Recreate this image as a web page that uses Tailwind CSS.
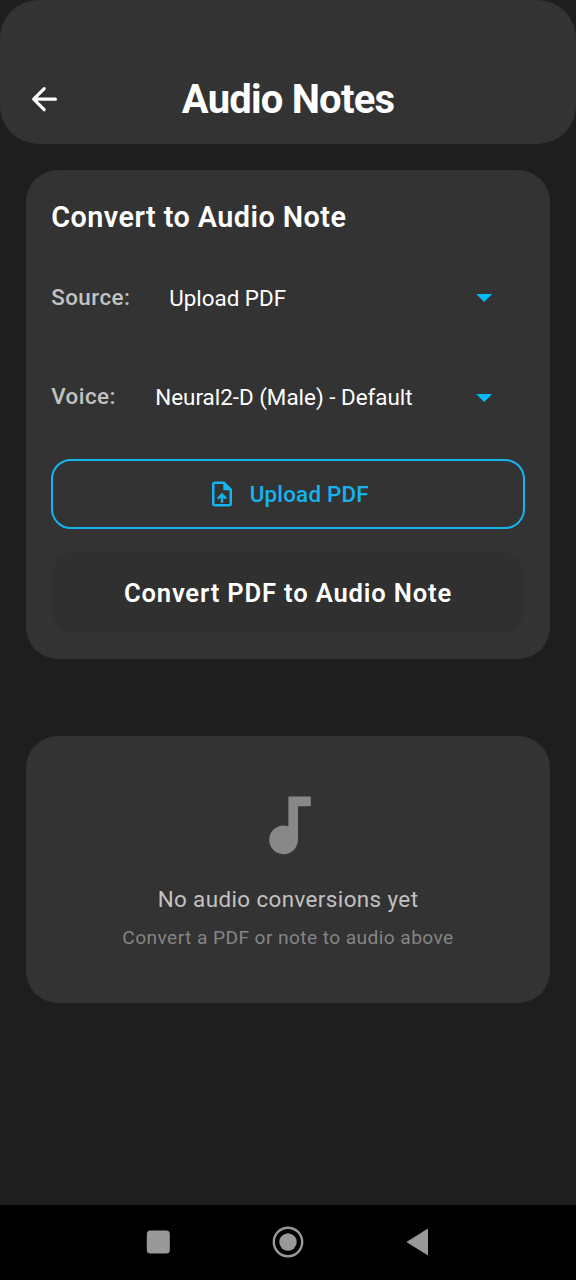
<!DOCTYPE html>
<html lang="en">
<head>
<meta charset="utf-8">
<title>Audio Notes</title>
<script src="https://cdn.jsdelivr.net/npm/@tailwindcss/browser@4"></script>
</head>
<body class="bg-[#1e1e1e]">
<div class="flex h-[1280px] w-[576px] flex-col overflow-hidden bg-[#1e1e1e] font-['Roboto',sans-serif] text-white">
  <header class="grid h-[144px] shrink-0 grid-cols-[89px_1fr_89px] items-center rounded-[38.4px] bg-[#333333] pt-[54px]">
    <button class="flex justify-center" aria-label="Back">
      <svg class="size-[38.4px]" viewBox="0 0 24 24" fill="currentColor"><path d="M19 11H7.83l4.88-4.88c.39-.39.39-1.03 0-1.42a.996.996 0 0 0-1.41 0l-6.59 6.59a.996.996 0 0 0 0 1.41l6.59 6.59a.996.996 0 1 0 1.41-1.41L7.83 13H19c.55 0 1-.45 1-1s-.45-1-1-1z"/></svg>
    </button>
    <h1 class="pt-0.5 text-center text-[40px] leading-[48px] font-bold tracking-[-0.8px] whitespace-nowrap">Audio Notes</h1>
  </header>

  <main class="flex flex-1 flex-col px-[25.6px] pt-[25.6px]">
    <section class="flex h-[489.6px] flex-col rounded-[32px] bg-[#333333] px-[25.6px] pt-[29px]">
      <h2 class="text-[28.8px] leading-[36px] font-semibold tracking-[0.45px] whitespace-nowrap">Convert to Audio Note</h2>
      <div class="mt-[23px] flex h-[80px] items-center text-[22.4px]">
        <span class="w-[118px] font-medium tracking-[0.45px] text-[#c2c2c2]">Source:</span>
        <span class="flex-1 pt-0.5">Upload PDF</span>
        <svg class="mr-[21.2px] size-[38.4px] text-[#03bafb]" viewBox="0 0 24 24" fill="currentColor"><path d="M7 10l5 5 5-5z"/></svg>
      </div>
      <div class="mt-[19.2px] flex h-[80px] items-center text-[22.4px]">
        <span class="w-[104px] font-medium tracking-[0.45px] text-[#c2c2c2]">Voice:</span>
        <span class="flex-1 pt-0.5 whitespace-nowrap">Neural2-D (Male) - Default</span>
        <svg class="mr-[21.2px] size-[38.4px] text-[#03bafb]" viewBox="0 0 24 24" fill="currentColor"><path d="M7 10l5 5 5-5z"/></svg>
      </div>
      <button class="mt-[22px] flex h-[70.4px] shrink-0 items-center justify-center gap-[12.5px] rounded-[20px] border-[2.4px] border-[#14b4ee] text-[22.4px] font-medium tracking-[0.2px] text-[#14b4ee]">
        <svg class="size-[30px]" viewBox="0 0 24 24" fill="currentColor"><path d="M14 2H6c-1.1 0-1.99.9-1.99 2L4 20c0 1.1.89 2 1.99 2H18c1.1 0 2-.9 2-2V8l-6-6zm4 18H6V4h7v5h5v11zM8 15.01l1.41 1.41L11 14.84V19h2v-4.16l1.59 1.59L16 15.01 12.01 11 8 15.01z"/></svg>
        <span class="pt-0.5">Upload PDF</span>
      </button>
      <button class="mt-[22.4px] flex h-[81px] shrink-0 items-center justify-center rounded-[25.6px] bg-[#303030] pt-0.5 text-[25.6px] font-semibold tracking-[0.83px] whitespace-nowrap">Convert PDF to Audio Note</button>
    </section>

    <section class="mt-[76.8px] flex h-[267px] flex-col items-center rounded-[32px] bg-[#333333] pt-[51.2px]">
      <svg class="size-[76.8px] text-[#888888]" viewBox="0 0 24 24" fill="currentColor"><path d="M12 3v9.28c-.47-.17-.97-.28-1.5-.28C8.01 12 6 14.01 6 16.5S8.01 21 10.5 21c2.31 0 4.2-1.75 4.45-4H15V6h4V3h-7z"/></svg>
      <p class="mt-[19px] text-[22.4px] leading-[32px] tracking-[0.4px] text-[#c2c2c2]">No audio conversions yet</p>
      <p class="mt-[9px] text-[19.2px] leading-[28px] tracking-[0.4px] text-[#858585]">Convert a PDF or note to audio above</p>
    </section>
  </main>

  <nav class="grid h-[75px] shrink-0 grid-cols-[158px_260px_158px] items-center bg-black pb-px text-[#999999]">
    <svg class="ml-[146px] size-6" viewBox="0 0 24 24" fill="currentColor"><rect x="0.8" y="0.5" width="23" height="23" rx="3.5"/></svg>
    <svg class="size-8 justify-self-center" viewBox="0 0 32 32" fill="currentColor"><circle cx="16" cy="16" r="14.2" fill="none" stroke="currentColor" stroke-width="2.4"/><circle cx="16" cy="16" r="8.7"/></svg>
    <svg class="-ml-3 h-7 w-6" viewBox="0 0 24 28" fill="currentColor" stroke="currentColor" stroke-linejoin="round"><path d="M1.2 14 21.5 1.3v25.4z"/></svg>
  </nav>
</div>
</body>
</html>
